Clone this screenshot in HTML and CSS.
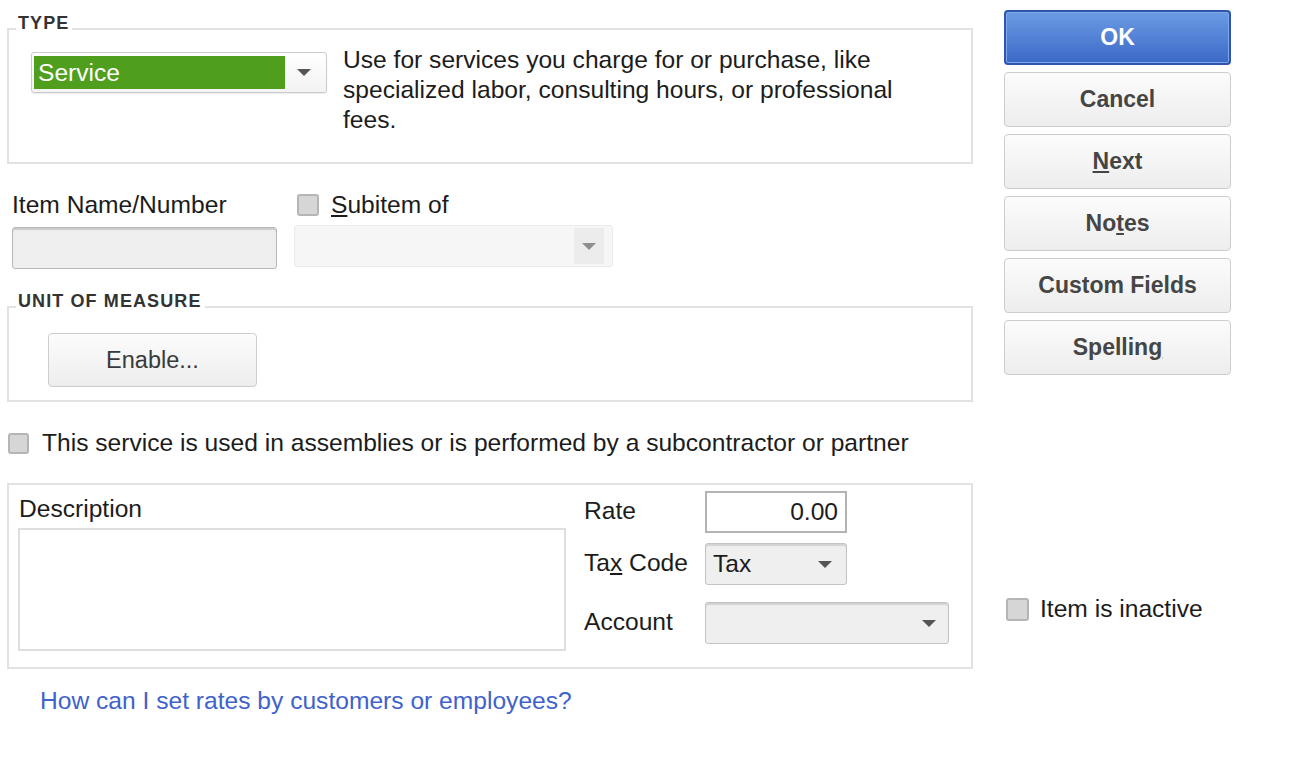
FILE: index.html
```html
<!DOCTYPE html>
<html lang="en">
<head>
    <meta charset="UTF-8">
    <meta name="viewport" content="width=device-width, initial-scale=1.0">
    <title>New Item</title>
    <link rel="stylesheet" href="styles.css">
</head>
<body>
    <div class="dialog">
        <div class="main">
            <fieldset class="group type-group">
                <legend>TYPE</legend>
                <div class="type-row">
                    <div class="select type-select">
                        <span class="select-value">Service</span>
                        <span class="arrow"></span>
                    </div>
                    <p class="type-help">Use for services you charge for or purchase, like specialized labor, consulting hours, or professional fees.</p>
                </div>
            </fieldset>

            <div class="name-row">
                <div class="field name-field">
                    <label class="field-label">Item Name/Number</label>
                    <div class="input name-input"></div>
                </div>
                <div class="field sub-field">
                    <label class="field-label check-label">
                        <span class="checkbox"></span>
                        <span><u>S</u>ubitem of</span>
                    </label>
                    <div class="select sub-select">
                        <span class="arrow-box"><span class="arrow light"></span></span>
                    </div>
                </div>
            </div>

            <fieldset class="group unit-group">
                <legend>UNIT OF MEASURE</legend>
                <button class="btn enable-btn">Enable...</button>
            </fieldset>

            <label class="check-row">
                <span class="checkbox"></span>
                <span>This service is used in assemblies or is performed by a subcontractor or partner</span>
            </label>

            <div class="details">
                <div class="desc-col">
                    <label class="field-label desc-label">Description</label>
                    <div class="textarea"></div>
                </div>
                <div class="price-col">
                    <div class="price-row">
                        <label class="price-label">Rate</label>
                        <div class="input rate-input">0.00</div>
                    </div>
                    <div class="price-row tax-row">
                        <label class="price-label">Ta<u>x</u> Code</label>
                        <div class="select gray-select tax-select">
                            <span class="select-text">Tax</span>
                            <span class="arrow"></span>
                        </div>
                    </div>
                    <div class="price-row account-row">
                        <label class="price-label">Account</label>
                        <div class="select gray-select account-select">
                            <span class="arrow"></span>
                        </div>
                    </div>
                </div>
            </div>

            <a class="help-link" href="#">How can I set rates by customers or employees?</a>
        </div>

        <div class="side">
            <button class="btn side-btn ok-btn">OK</button>
            <button class="btn side-btn">Cancel</button>
            <button class="btn side-btn"><u>N</u>ext</button>
            <button class="btn side-btn">No<u>t</u>es</button>
            <button class="btn side-btn">Custom Fields</button>
            <button class="btn side-btn">Spellin<u>g</u></button>
            <label class="inactive-row">
                <span class="checkbox"></span>
                <span>Item is inactive</span>
            </label>
        </div>
    </div>
</body>
</html>
```

FILE: styles.css
```css
body {
    margin: 0;
    background-color: #fff;
    font-family: "Liberation Sans", Arial, sans-serif;
    font-size: 24.6px;
    color: #1c1c1c;
}

.dialog {
    display: flex;
    padding: 10px 0 0 7px;
}

.main {
    width: 966px;
}

/* group boxes */
.group {
    margin: 5px 0 0;
    border: 2px solid #e2e2e2;
    min-width: 0;
}

.group legend {
    padding: 0 3px 12px 2px;
    font-size: 18px;
    line-height: 16px;
    font-weight: bold;
    letter-spacing: 1.1px;
    color: #333;
}

.type-group {
    padding: 9px 20px 27px 22px;
}

.type-group legend {
    margin-left: -15px;
}

.type-row {
    display: flex;
    align-items: flex-start;
}

.type-help {
    margin: -7px 0 0 16px;
    width: 580px;
    line-height: 30px;
}

/* selects */
.select {
    box-sizing: border-box;
    display: flex;
    align-items: center;
    height: 41px;
    border: 1px solid #cacaca;
    border-radius: 3px;
    background: linear-gradient(#fff, #f3f3f3);
    box-shadow: 0 1px 1px rgba(0, 0, 0, 0.08);
}

.type-select {
    width: 296px;
    padding: 2px;
}

.select-value {
    box-sizing: border-box;
    width: 251px;
    height: 33px;
    padding-left: 4px;
    line-height: 33px;
    background-color: #4f9e1e;
    color: #fff;
}

.arrow {
    margin-left: auto;
    margin-right: 13px;
    width: 0;
    height: 0;
    border-left: 7px solid transparent;
    border-right: 7px solid transparent;
    border-top: 7px solid #555;
}

.arrow.light {
    margin: 0;
    border-top-color: #8e8e8e;
}

.arrow-box {
    margin-left: auto;
    margin-right: 8px;
    display: flex;
    align-items: center;
    justify-content: center;
    width: 30px;
    height: 36px;
    background-color: #ececec;
}

/* item name row */
.name-row {
    display: flex;
    gap: 17px;
    margin-top: 27px;
    padding-left: 5px;
}

.field {
    display: flex;
    flex-direction: column;
}

.field-label {
    display: block;
    line-height: 28px;
}

.check-label {
    display: flex;
    align-items: center;
    gap: 12px;
    padding-left: 3px;
}

.checkbox {
    box-sizing: border-box;
    display: inline-block;
    width: 22px;
    height: 22px;
    border: 2px solid #b5b5b5;
    border-radius: 3px;
    background-color: #d6d6d6;
    flex-shrink: 0;
}

.input {
    box-sizing: border-box;
    height: 42px;
}

.name-input {
    margin-top: 8px;
    width: 265px;
    border: 1px solid #b9b9b9;
    border-radius: 3px;
    background-color: #efefef;
    box-shadow: inset 0 2px 1px rgba(0, 0, 0, 0.15);
}

.sub-select {
    margin-top: 6px;
    width: 319px;
    height: 42px;
    border-color: #ebebeb;
    background: #f6f6f6;
    box-shadow: none;
}

/* unit of measure */
.unit-group {
    margin-top: 24px;
    padding: 12px 20px 13px 39px;
}

.unit-group legend {
    margin-left: -32px;
}

.btn {
    font-family: inherit;
    font-weight: bold;
    color: #454545;
    border: 1px solid #cdcdcd;
    border-radius: 4px;
    background: linear-gradient(#fcfcfc, #ededed);
    cursor: pointer;
}

.enable-btn {
    width: 209px;
    height: 54px;
    font-size: 23.5px;
    font-weight: normal;
    color: #3a3a3a;
}

/* checkbox row */
.check-row {
    display: flex;
    align-items: center;
    gap: 13px;
    margin: 27px 0 0 1px;
    line-height: 28px;
}

.check-row .checkbox {
    width: 21px;
    height: 21px;
}

/* description / price box */
.details {
    display: flex;
    margin-top: 26px;
    height: 186px;
    box-sizing: border-box;
    padding: 6px 22px 0 9px;
    border: 2px solid #e2e2e2;
}

.desc-col {
    padding-top: 4px;
}

.desc-label {
    padding-left: 1px;
}

.textarea {
    margin-top: 5px;
    width: 548px;
    height: 123px;
    box-sizing: border-box;
    border: 2px solid #dedede;
}

.price-col {
    margin-left: 18px;
    display: flex;
    flex-direction: column;
}

.price-row {
    display: flex;
    align-items: center;
}

.price-label {
    width: 121px;
    margin-top: -3px;
}

.rate-input {
    width: 142px;
    border: 2px solid #b3b3b3;
    padding-right: 7px;
    text-align: right;
    line-height: 38px;
}

.tax-row {
    margin-top: 10px;
}

.account-row {
    margin-top: 17px;
}

.gray-select {
    height: 42px;
    border-color: #c3c3c3;
    background: #efefef;
    box-shadow: inset 0 2px 1px rgba(0, 0, 0, 0.12);
}

.tax-select {
    width: 142px;
}

.select-text {
    padding-left: 7px;
}

.tax-select .arrow {
    margin-right: 14px;
}

.account-select {
    width: 244px;
}

.account-select .arrow {
    margin-right: 12px;
}

.help-link {
    display: inline-block;
    margin: 18px 0 0 33px;
    line-height: 28px;
    color: #3f62cc;
    text-decoration: none;
}

/* right column */
.side {
    margin-left: 31px;
    width: 227px;
    display: flex;
    flex-direction: column;
    gap: 7px;
}

.side-btn {
    height: 55px;
    font-size: 23px;
}

.ok-btn {
    color: #fff;
    border: 2px solid #2f56aa;
    background: linear-gradient(#6b9be4, #3c69c7);
    box-shadow: inset 0 0 0 1px #7ea8ea;
}

.inactive-row {
    display: flex;
    align-items: center;
    gap: 11px;
    margin: 213px 0 0 2px;
}

.inactive-row .checkbox {
    width: 23px;
    height: 23px;
}
```
